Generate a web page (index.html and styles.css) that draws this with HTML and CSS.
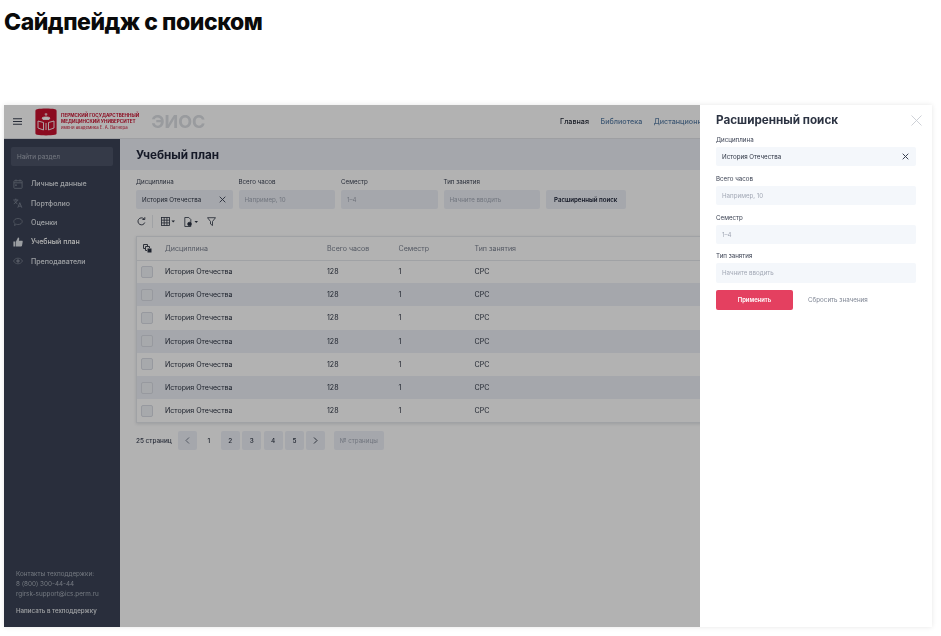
FILE: index.html
```html
<!DOCTYPE html>
<html lang="ru">
<head>
<meta charset="utf-8">
<title>Сайдпейдж с поиском</title>
<link rel="stylesheet" href="styles.css">
</head>
<body>
<h1 class="page-title">Сайдпейдж с поиском</h1>
<div class="frame">
  <div class="app">
    <header class="topbar">
      <svg class="burger" width="9" height="7" viewBox="0 0 9 7"><path d="M0 .7h9M0 3.500h9M0 6.300h9" stroke="#3a4152" stroke-width="1.100"/></svg>
      <svg class="logo-mark" width="22" height="28" viewBox="0 0 22 28">
        <path d="M2 1.200C7 .4 15 .4 20 1.200c1 .2 1.600.8 1.600 1.800v22c0 1-.6 1.600-1.600 1.800-5 .8-13 .8-18 0-1-.2-1.600-.8-1.600-1.800V3c0-1 .6-1.600 1.600-1.800z" fill="#c8102e"/>
        <path d="M11 5v3M9.600 6.200h2.800M7 10c1-1.400 7-1.400 8 0l-1 1.500H8z" stroke="#fff" stroke-width=".8" fill="#fff"/>
        <path d="M3 13l5.500 1.500V22L3 20zM19 13l-5.500 1.500V22l5.500-2zM11 15v7" stroke="#fff" stroke-width=".9" fill="none"/>
      </svg>
      <div class="logo-text">
        <span class="logo-line">ПЕРМСКИЙ ГОСУДАРСТВЕННЫЙ</span>
        <span class="logo-line">МЕДИЦИНСКИЙ УНИВЕРСИТЕТ</span>
        <span class="logo-sub">имени академика Е. А. Вагнера</span>
      </div>
      <span class="brand">ЭИОС</span>
      <nav class="topnav">
        <a class="topnav-item active">Главная</a>
        <a class="topnav-item">Библиотека</a>
        <a class="topnav-item">Дистанционное</a>
      </nav>
    </header>
    <div class="body-row">
      <aside class="sidebar">
        <div class="side-search">Найти раздел</div>
        <ul class="side-menu">
          <li class="side-item">
            <svg class="side-icon" width="10" height="10" viewBox="0 0 10 10" fill="none" stroke="#7b8291" stroke-width=".9"><rect x=".9" y="1.700" width="8.200" height="7.600" rx=".6"/><path d="M.9 3.800h8.200M3 .5v2M7 .5v2"/><rect x="2.200" y="5.400" width="1.500" height="1.500" fill="#7b8291" stroke="none"/></svg>
            <span>Личные данные</span>
          </li>
          <li class="side-item">
            <svg class="side-icon" width="10" height="10" viewBox="0 0 10 10" fill="none" stroke="#8d94a3" stroke-width=".7"><path d="M.3 2h5M2.800.6V2M4.300 2C4 3.600 2.500 5 .8 5.800M1.600 2.800c.5 1.300 1.500 2.400 2.800 3M4.800 9.700l2-5 2 5M5.500 8.200h2.700"/></svg>
            <span>Портфолио</span>
          </li>
          <li class="side-item">
            <svg class="side-icon" width="10" height="10" viewBox="0 0 10 10" fill="none" stroke="#7b8291" stroke-width=".8"><path d="M5 1.500c2.400 0 4.200 1.300 4.200 3S7.400 7.500 5 7.500c-.5 0-1 0-1.500-.2L1.500 8.500l.4-2C1.200 6 .8 5.300.8 4.500c0-1.700 1.800-3 4.200-3z"/></svg>
            <span>Оценки</span>
          </li>
          <li class="side-item current">
            <svg class="side-icon" width="10" height="10" viewBox="0 0 10 10" fill="#dfe2e8"><path d="M.4 4.500h2v5h-2zM3 4.500 5 .6c.8 0 1.300.6 1.200 1.400l-.3 1.800h3c.6 0 .9.500.8 1L9 8.700c-.1.500-.5.800-1 .8H3z"/></svg>
            <span>Учебный план</span>
          </li>
          <li class="side-item">
            <svg class="side-icon" width="10" height="10" viewBox="0 0 10 10" fill="none" stroke="#7b8291" stroke-width=".8"><path d="M.5 5C1.500 3.200 3.100 2.200 5 2.200S8.500 3.200 9.500 5C8.500 6.800 6.900 7.800 5 7.800S1.500 6.800.5 5z"/><circle cx="5" cy="5" r="1.300" fill="#7b8291"/></svg>
            <span>Преподаватели</span>
          </li>
        </ul>
        <div class="side-foot">
          <p class="foot-muted">Контакты техподдержки:</p>
          <p class="foot-muted">8 (800) 300-44-44</p>
          <p class="foot-muted">rgirsk-support@ics.perm.ru</p>
          <p class="foot-link">Написать в техподдержку</p>
        </div>
      </aside>
      <main class="content">
        <div class="content-title"><h2>Учебный план</h2></div>
        <div class="content-inner">
          <form class="filters">
            <div class="field">
              <label>Дисциплина</label>
              <div class="input filled">История Отечества<svg class="clear" width="7" height="7" viewBox="0 0 7 7"><path d="M.7.700l5.600 5.600M6.300.7.700 6.300" stroke="#3a4152" stroke-width=".9"/></svg></div>
            </div>
            <div class="field"><label>Всего часов</label><div class="input">Например, 10</div></div>
            <div class="field"><label>Семестр</label><div class="input">1–4</div></div>
            <div class="field"><label>Тип занятия</label><div class="input">Начните вводить</div></div>
            <div class="adv-btn">Расширенный поиск</div>
          </form>
          <div class="toolbar">
            <svg width="9" height="9" viewBox="0 0 9 9" fill="none" stroke="#2c3342" stroke-width=".9"><path d="M7.800 5.500A3.500 3.500 0 1 1 6.900 1.800"/><path d="M5.400 2.500h2.400V.2"/></svg>
            <span class="tool-sep"></span>
            <svg class="tool-a" width="14" height="9" viewBox="0 0 14 9" fill="none" stroke="#2c3342" stroke-width=".8"><rect x=".5" y=".5" width="8" height="8"/><path d="M.5 3.200h8M.5 5.900h8M3.200.5v8M5.900.5v8"/><path d="M10.500 3.500h3.500L12.200 5.500z" fill="#2c3342" stroke="none"/></svg>
            <svg class="tool-b" width="14" height="10" viewBox="0 0 14 10" fill="none" stroke="#2c3342" stroke-width=".8"><path d="M.8.500h4l2 2v7H.8z"/><circle cx="5.500" cy="7" r="1.800" fill="#2c3342"/><path d="M10.500 4h3.500L12.200 6z" fill="#2c3342" stroke="none"/></svg>
            <svg class="tool-c" width="9" height="9" viewBox="0 0 9 9" fill="none" stroke="#2c3342" stroke-width=".8"><path d="M.5.700h8L5.500 4.500v4L3.500 7V4.500z"/></svg>
          </div>
          <div class="table-wrap">
            <table class="table">
              <thead>
                <tr>
                  <th class="col-check"><svg width="9" height="9" viewBox="0 0 9 9" fill="none" stroke="#2c3342" stroke-width=".9"><path d="M.5.500h4v1.500M.5.500v4H2M2.500 2.500h4V4M2.500 2.500v4H4"/><rect x="4.500" y="4.500" width="4" height="4" fill="#2c3342" stroke="none"/></svg></th>
                  <th class="col-disc">Дисциплина</th>
                  <th class="col-hours">Всего часов</th>
                  <th class="col-sem">Семестр</th>
                  <th>Тип занятия</th>
                </tr>
              </thead>
              <tbody>
                <tr><td class="col-check"><span class="check"></span></td><td>История Отечества</td><td>128</td><td>1</td><td>СРС</td></tr>
                <tr class="alt"><td class="col-check"><span class="check"></span></td><td>История Отечества</td><td>128</td><td>1</td><td>СРС</td></tr>
                <tr><td class="col-check"><span class="check"></span></td><td>История Отечества</td><td>128</td><td>1</td><td>СРС</td></tr>
                <tr class="alt"><td class="col-check"><span class="check"></span></td><td>История Отечества</td><td>128</td><td>1</td><td>СРС</td></tr>
                <tr><td class="col-check"><span class="check"></span></td><td>История Отечества</td><td>128</td><td>1</td><td>СРС</td></tr>
                <tr class="alt"><td class="col-check"><span class="check"></span></td><td>История Отечества</td><td>128</td><td>1</td><td>СРС</td></tr>
                <tr><td class="col-check"><span class="check"></span></td><td>История Отечества</td><td>128</td><td>1</td><td>СРС</td></tr>
              </tbody>
            </table>
          </div>
          <div class="pager">
            <span class="pager-total">25 страниц</span>
            <span class="page-btn"><svg width="5" height="7" viewBox="0 0 5 7" fill="none" stroke="#6d7483" stroke-width=".9"><path d="M4 .5 1 3.500 4 6.500"/></svg></span>
            <span class="page-btn plain">1</span>
            <span class="page-btn">2</span>
            <span class="page-btn">3</span>
            <span class="page-btn">4</span>
            <span class="page-btn">5</span>
            <span class="page-btn"><svg width="5" height="7" viewBox="0 0 5 7" fill="none" stroke="#2c3342" stroke-width=".9"><path d="M1 .5 4 3.500 1 6.500"/></svg></span>
            <span class="page-input">№ страницы</span>
          </div>
        </div>
      </main>
    </div>
  </div>
  <div class="overlay"></div>
  <aside class="drawer">
    <div class="drawer-head">
      <h3>Расширенный поиск</h3>
      <svg width="11" height="11" viewBox="0 0 11 11"><path d="M.5.500l10 10M10.500.500l-10 10" stroke="#c8ccd3" stroke-width=".9"/></svg>
    </div>
    <div class="drawer-form">
      <div class="dfield">
        <label>Дисциплина</label>
        <div class="dinput filled">История Отечества<svg class="clear" width="7" height="7" viewBox="0 0 7 7"><path d="M.7.700l5.600 5.600M6.300.7.700 6.300" stroke="#3a4152" stroke-width="1"/></svg></div>
      </div>
      <div class="dfield"><label>Всего часов</label><div class="dinput">Например, 10</div></div>
      <div class="dfield"><label>Семестр</label><div class="dinput">1–4</div></div>
      <div class="dfield"><label>Тип занятия</label><div class="dinput">Начните вводить</div></div>
    </div>
    <div class="drawer-actions">
      <span class="apply">Применить</span>
      <span class="reset">Сбросить значения</span>
    </div>
  </aside>
</div>
</body>
</html>
```
FILE: styles.css
```css
* { box-sizing: border-box; }
html, body { margin: 0; padding: 0; background: #fff; overflow: hidden; }
body { width: 941px; height: 636px; font-family: Inter, "Liberation Sans", sans-serif; color: #2c3342; }
.page-title { margin: 0; padding: 9px 0 0 4px; height: 105px; font-size: 23px; line-height: 27px; font-weight: 800; letter-spacing: -.46px; color: #0a0a0a; }
.frame { position: relative; margin-left: 4px; width: 928px; height: 522px; overflow: hidden; box-shadow: 0 0 5px rgba(0,0,0,.1); }
.app { display: flex; flex-direction: column; width: 100%; height: 100%; background: #fff; filter: blur(.4px); }
.topbar { display: flex; align-items: center; height: 34px; padding-left: 9px; flex: none; border-bottom: 1px solid #e2e4e9; }
.burger { flex: none; }
.logo-mark { flex: none; margin-left: 13px; }
.logo-text { display: flex; flex-direction: column; margin-left: 4px; color: #c8102e; line-height: 6px; }
.logo-line { font-size: 4.600px; font-weight: 700; white-space: nowrap; }
.logo-sub { font-size: 4.300px; white-space: nowrap; }
.brand { margin-left: 12px; font-size: 18px; font-weight: 700; color: #dbdee3; }
.topnav { display: flex; gap: 11.500px; margin-left: auto; width: 232px; flex: none; overflow: hidden; white-space: nowrap; font-size: 7.200px; font-weight: 500; color: #5b7fa6; margin-right: 140px; }
.topnav-item.active { color: #1f2533; }
.body-row { display: flex; flex: 1; min-height: 0; }
.sidebar { display: flex; flex-direction: column; width: 116px; flex: none; background: #3b4356; padding: 8px 7px 11px; color: #fff; }
.side-search { height: 19px; background: #4c5468; border-radius: 2px; padding-left: 6px; line-height: 20px; color: #a9aeba; font-size: 6.400px; }
.side-menu { list-style: none; margin: 8px 0 0; padding: 0; display: flex; flex-direction: column; }
.side-item { display: flex; align-items: center; height: 19.400px; padding-left: 2px; color: #dfe2e8; font-size: 7.050px; font-weight: 500; }
.side-icon { flex: none; margin-right: 8px; }
.side-item.current { color: #fff; }
.side-foot { margin-top: auto; padding-left: 5px; font-size: 6.350px; line-height: 9.700px; }
.side-foot p { margin: 0; white-space: nowrap; }
.foot-muted { color: #a7adb9; }
.foot-link { margin-top: 7px !important; color: #e6e8ec; font-weight: 500; font-size: 6.200px; }
.content { flex: 1; min-width: 0; display: flex; flex-direction: column; }
.content-title { height: 31px; padding-top: 1px; background: #edf0f7; padding-left: 16px; display: flex; align-items: center; flex: none; }
.content-title h2 { margin: 0; font-size: 11.700px; font-weight: 700; color: #20263a; }
.content-inner { padding: 8px 0 0 16px; }
.filters { display: flex; align-items: flex-end; gap: 6px; }
.field { display: flex; flex-direction: column; gap: 4px; width: 96.500px; flex: none; }
.field label { font-size: 6.200px; line-height: 8px; white-space: nowrap; color: #3a4152; }
.input { position: relative; height: 19px; background: #edf0f7; border-radius: 2px; padding-left: 6px; line-height: 19px; font-size: 6.200px; color: #a2a8b5; white-space: nowrap; }
.input.filled { color: #2c3342; }
.clear { position: absolute; right: 7px; top: 6px; }
.adv-btn { height: 19px; width: 80px; padding-left: 8px; background: #edf0f7; border-radius: 2px; line-height: 19px; font-size: 6.150px; font-weight: 600; color: #20263a; white-space: nowrap; }
.toolbar { display: flex; align-items: center; height: 15px; margin: 5px 0 0; padding-left: 1px; }
.tool-sep { width: 1px; height: 13px; background: #e6e8ec; margin: 0 8px 0 6px; }
.tool-b, .tool-c { margin-left: 9px; }
.table-wrap { margin-top: 7px; width: 640px; border: 1px solid #e6e8ec; box-shadow: 0 1px 3px rgba(30,40,60,.14); background: #fff; }
.table { border-collapse: collapse; width: 100%; table-layout: fixed; font-size: 7.070px; }
.table th { height: 23px; padding: 0; font-weight: 400; text-align: left; color: #7b8291; border-bottom: 1px solid #e6e8ec; white-space: nowrap; }
.table td { height: 23.200px; padding: 0; white-space: nowrap; color: #2c3342; }
.col-check { width: 28px; padding-left: 4px !important; }
.col-check svg { display: block; margin-left: 2px; }
.col-disc { width: 162px; }
.col-hours { width: 71.500px; }
.col-sem { width: 76px; }
.check { display: block; width: 12px; height: 12px; border: 1px solid #d8dce4; border-radius: 2px; background: #f0f2f6; }
.alt td { background: #edf0f7; }
.pager { display: flex; align-items: center; height: 19px; margin-top: 8px; font-size: 6.400px; font-weight: 500; }
.pager-total { width: 42px; color: #3a4152; white-space: nowrap; }
.page-btn { display: flex; align-items: center; justify-content: center; width: 19px; height: 19px; margin-right: 2.400px; background: #edf0f7; border-radius: 2px; color: #2c3342; }
.page-btn.plain { background: none; }
.page-input { margin-left: 6px; width: 50px; height: 19px; background: #edf0f7; border-radius: 2px; text-align: center; line-height: 19px; color: #a2a8b5; font-weight: 400; white-space: nowrap; font-size: 6.200px; }
.overlay { position: absolute; inset: 0; background: rgba(0,0,0,.3); }
.drawer { position: absolute; top: 0; right: 0; bottom: 0; width: 232px; background: #fff; padding: 0 16px; filter: blur(.35px); }
.drawer-head { display: flex; align-items: center; justify-content: space-between; height: 30px; margin-right: -6px; }
.drawer-head h3 { margin: 0; font-size: 11.700px; font-weight: 700; color: #2c3342; }
.drawer-form { display: flex; flex-direction: column; gap: 7.500px; }
.dfield { display: flex; flex-direction: column; gap: 2.500px; }
.dfield label { font-size: 6.200px; line-height: 9.500px; color: #3a4152; }
.dinput { position: relative; height: 19.300px; background: #f4f7fb; border-radius: 2px; padding-left: 6px; line-height: 19.300px; font-size: 6.200px; color: #a2a8b5; }
.dinput.filled { color: #2c3342; }
.drawer-actions { display: flex; align-items: center; margin-top: 7.500px; }
.apply { width: 77px; height: 20px; background: #e44060; border-radius: 2px; color: #fff; text-align: center; line-height: 20px; font-size: 5.900px; font-weight: 600; }
.reset { margin-left: 15px; font-size: 6.250px; color: #7f8694; }
```
